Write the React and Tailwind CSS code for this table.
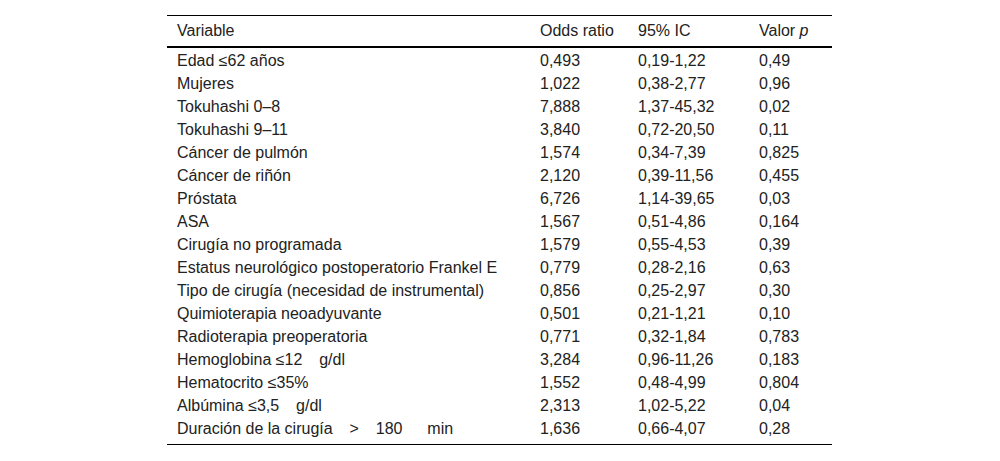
import React from "react";

const rows = [
  ["Edad ≤62 años", "0,493", "0,19-1,22", "0,49"],
  ["Mujeres", "1,022", "0,38-2,77", "0,96"],
  ["Tokuhashi 0–8", "7,888", "1,37-45,32", "0,02"],
  ["Tokuhashi 9–11", "3,840", "0,72-20,50", "0,11"],
  ["Cáncer de pulmón", "1,574", "0,34-7,39", "0,825"],
  ["Cáncer de riñón", "2,120", "0,39-11,56", "0,455"],
  ["Próstata", "6,726", "1,14-39,65", "0,03"],
  ["ASA", "1,567", "0,51-4,86", "0,164"],
  ["Cirugía no programada", "1,579", "0,55-4,53", "0,39"],
  ["Estatus neurológico postoperatorio Frankel E", "0,779", "0,28-2,16", "0,63"],
  ["Tipo de cirugía (necesidad de instrumental)", "0,856", "0,25-2,97", "0,30"],
  ["Quimioterapia neoadyuvante", "0,501", "0,21-1,21", "0,10"],
  ["Radioterapia preoperatoria", "0,771", "0,32-1,84", "0,783"],
  ["Hemoglobina ≤12 \u2002 g/dl", "3,284", "0,96-11,26", "0,183"],
  ["Hematocrito ≤35%", "1,552", "0,48-4,99", "0,804"],
  ["Albúmina ≤3,5 \u2002 g/dl", "2,313", "1,02-5,22", "0,04"],
  ["Duración de la cirugía \u2002 > \u2002 180 \u2003 min", "1,636", "0,66-4,07", "0,28"],
];

const cols = "grid grid-cols-[363px_98px_121px_83px]";

const App = () => {
  return (
    <div className="w-[1000px] h-[461px] bg-white pt-[15px] font-['Liberation_Sans',Arial,sans-serif] text-[16px] text-[#222]">
      <div className="ml-[167px] w-[665px] border-t border-b border-black pb-[4px]">
        <div className={`${cols} h-[32px] leading-[30px] border-b-2 border-black`}>
          <div className="pl-[10px]">Variable</div>
          <div className="pl-[10px]">Odds ratio</div>
          <div className="pl-[10px]">95% IC</div>
          <div className="pl-[10px]">
            Valor <i>p</i>
          </div>
        </div>
        <div className="pt-[1px]">
          {rows.map((row, index) => (
            <div key={index} className={`${cols} h-[23px] leading-[23px] whitespace-nowrap`}>
              {row.map((cell, i) => (
                <div key={i} className="pl-[10px]">
                  {cell}
                </div>
              ))}
            </div>
          ))}
        </div>
      </div>
    </div>
  );
};

export default App;
